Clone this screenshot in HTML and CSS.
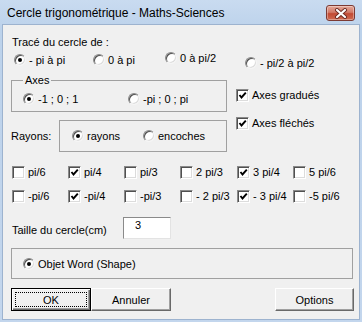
FILE: index.html
```html
<!DOCTYPE html>
<html lang="fr">
<head>
    <meta charset="UTF-8">
    <title>Cercle trigonométrique - Maths-Sciences</title>
    <link rel="stylesheet" href="styles.css">
</head>
<body>
    <div class="window">
        <div class="titlebar">
            <span class="title">Cercle trigonométrique - Maths-Sciences</span>
            <span class="close-button">
                <svg width="14" height="11" viewBox="0 0 14 11">
                    <path d="M3 2 L11 9 M11 2 L3 9" stroke="#6b2a22" stroke-width="4" stroke-linecap="round"/>
                    <path d="M3 2 L11 9 M11 2 L3 9" stroke="#ffffff" stroke-width="2.2" stroke-linecap="round"/>
                </svg>
            </span>
        </div>

        <div class="client">
            <div class="heading">Tracé du cercle de :</div>

            <!-- Range of the circle -->
            <div class="range-row">
                <label class="opt range-1"><span class="radio checked"></span>- pi à pi</label>
                <label class="opt range-2"><span class="radio"></span>0 à pi</label>
                <label class="opt range-3"><span class="radio"></span>0 à pi/2</label>
                <label class="opt range-4"><span class="radio"></span>- pi/2 à pi/2</label>
            </div>

            <div class="upper">
                <div class="left-col">
                    <fieldset class="axes">
                        <legend>Axes</legend>
                        <div class="axes-row">
                            <label class="opt axes-1"><span class="radio checked"></span>-1 ; 0 ; 1</label>
                            <label class="opt"><span class="radio"></span>-pi ; 0 ; pi</label>
                        </div>
                    </fieldset>

                    <div class="rays-row">
                        <span class="rays-label">Rayons:</span>
                        <div class="group rays-group">
                            <label class="opt rays-1"><span class="radio checked"></span>rayons</label>
                            <label class="opt"><span class="radio"></span>encoches</label>
                        </div>
                    </div>
                </div>

                <div class="right-col">
                    <label class="opt check-line"><span class="checkbox checked"></span>Axes gradués</label>
                    <label class="opt check-line"><span class="checkbox checked"></span>Axes fléchés</label>
                </div>
            </div>

            <!-- Angles to draw -->
            <div class="angles">
                <label class="opt"><span class="checkbox"></span>pi/6</label>
                <label class="opt"><span class="checkbox checked"></span>pi/4</label>
                <label class="opt"><span class="checkbox"></span>pi/3</label>
                <label class="opt"><span class="checkbox"></span>2 pi/3</label>
                <label class="opt"><span class="checkbox checked"></span>3 pi/4</label>
                <label class="opt"><span class="checkbox"></span>5 pi/6</label>
                <label class="opt"><span class="checkbox"></span>-pi/6</label>
                <label class="opt"><span class="checkbox checked"></span>-pi/4</label>
                <label class="opt"><span class="checkbox"></span>-pi/3</label>
                <label class="opt"><span class="checkbox"></span>- 2 pi/3</label>
                <label class="opt"><span class="checkbox checked"></span>- 3 pi/4</label>
                <label class="opt"><span class="checkbox"></span>-5 pi/6</label>
            </div>

            <div class="size-row">
                <span class="size-label">Taille du cercle(cm)</span>
                <div class="textbox">3</div>
            </div>

            <div class="group output-group">
                <label class="opt"><span class="radio checked"></span>Objet Word (Shape)</label>
            </div>

            <div class="buttons">
                <button class="btn default"><span class="focus">OK</span></button>
                <button class="btn"><span>Annuler</span></button>
                <button class="btn options"><span>Options</span></button>
            </div>
        </div>
    </div>
</body>
</html>
```

FILE: styles.css
```css
/* Dialog window */
* {
    box-sizing: border-box;
}
body {
    margin: 0;
    font-family: "Liberation Sans", Arial, sans-serif;
    font-size: 11px;
    color: #000;
}
.window {
    width: 362px;
    height: 322px;
    padding: 0 2px 2px;
    background: linear-gradient(#c9dbf0, #bcd2eb 30px, #c3d6ed);
    display: flex;
    flex-direction: column;
}
.titlebar {
    height: 24px;
    flex: none;
    display: flex;
    align-items: center;
    justify-content: space-between;
    padding: 2px 5px 0 5px;
    font-size: 12px;
}
.close-button {
    width: 29px;
    height: 16px;
    border: 1px solid #7c3a33;
    border-radius: 3px;
    background: linear-gradient(#e5a899, #d27a68 45%, #c24a33 55%, #cf6b52);
    box-shadow: inset 0 0 0 1px rgba(255, 255, 255, 0.35);
    display: flex;
    align-items: center;
    justify-content: center;
}
.client {
    flex: 1;
    background: #f0f0f0;
    border: 1px solid #9db3cf;
    padding: 10px 5px 0 8px;
}

/* Radio buttons and check boxes */
.opt {
    display: flex;
    align-items: center;
    gap: 3px;
    height: 14px;
    white-space: nowrap;
}
.radio {
    flex: none;
    width: 12px;
    height: 12px;
    border-radius: 50%;
    background: #fff;
    border: 1px solid;
    border-color: #8a8a8a #f4f4f4 #f4f4f4 #8a8a8a;
    box-shadow: inset 1px 1px 0 #505050, inset -1px -1px 0 #dcdcdc;
    display: flex;
    align-items: center;
    justify-content: center;
}
.radio.checked::after {
    content: "";
    width: 4px;
    height: 4px;
    border-radius: 50%;
    background: #000;
}
.checkbox {
    flex: none;
    width: 13px;
    height: 13px;
    background: #fff;
    border: 1px solid;
    border-color: #8a8a8a #fff #fff #8a8a8a;
    box-shadow: inset 1px 1px 0 #505050, inset -1px -1px 0 #dcdcdc;
}
.checkbox.checked {
    background: #fff url("data:image/svg+xml,%3Csvg xmlns='http://www.w3.org/2000/svg' width='11' height='11'%3E%3Cpath d='M2.5 5 L4.5 7.5 L8.8 2.6' fill='none' stroke='%23000' stroke-width='1.9'/%3E%3C/svg%3E") center / 11px 11px no-repeat;
}
.group, fieldset {
    border: 1px solid #a0a0a0;
}

.heading {
    height: 14px;
    line-height: 14px;
    margin-left: 1px;
}
.range-row {
    display: flex;
    align-items: flex-start;
    height: 14px;
    margin-top: 4px;
}
.range-1 {
    margin-left: 3px;
    width: 79px;
}
.range-2 {
    width: 72px;
}
.range-3 {
    width: 80px;
    margin-top: -2px;
}
.range-4 {
    margin-top: 3px;
}

.upper {
    display: flex;
    margin-top: 7px;
}
.left-col {
    width: 216px;
}
fieldset.axes {
    margin: 0;
    padding: 6px 0 5px 11px;
    min-width: 0;
}
fieldset.axes legend {
    padding: 0 2px;
    height: 12px;
    line-height: 12px;
}
.axes-row {
    display: flex;
}
.axes-1 {
    width: 105px;
}
.rays-row {
    display: flex;
    align-items: center;
    margin-top: 8px;
}
.rays-label {
    width: 48px;
}
.rays-group {
    width: 168px;
    height: 32px;
    display: flex;
    align-items: center;
    padding-left: 12px;
}
.rays-1 {
    width: 71px;
}
.right-col {
    margin-left: 9px;
}
.check-line {
    margin-top: 14px;
}

.angles {
    display: grid;
    grid-template-columns: 56px 56px 56px 57px 56px auto;
    grid-auto-rows: 14px;
    row-gap: 10px;
    margin: 13px 0 0 1px;
}

.size-row {
    display: flex;
    align-items: center;
    height: 22px;
    margin-top: 14px;
}
.size-label {
    width: 111px;
    margin-left: 1px;
    padding-top: 3px;
}
.textbox {
    width: 48px;
    height: 22px;
    background: #fff;
    border: 1px solid;
    border-color: #8a8a8a #e3e3e3 #e3e3e3 #8a8a8a;
    padding: 1px 0 0 11px;
    line-height: 13px;
}

.output-group {
    height: 31px;
    margin: 9px 1px 0 0;
    display: flex;
    align-items: center;
    padding-left: 11px;
}

/* Command buttons */
.buttons {
    display: flex;
    margin-top: 9px;
}
.btn {
    width: 80px;
    height: 23px;
    margin: 0;
    padding: 0;
    font: inherit;
    color: #000;
    background: #f0f0f0;
    border: 1px solid;
    border-color: #fff #696969 #696969 #fff;
    box-shadow: inset -1px -1px 0 #a0a0a0;
    display: flex;
    align-items: center;
    justify-content: center;
}
.btn.default {
    border-color: #000;
    box-shadow: inset 1px 1px 0 #fff, inset -1px -1px 0 #696969, inset -2px -2px 0 #a0a0a0;
    padding: 3px;
}
.btn .focus {
    flex: 1;
    align-self: stretch;
    border: 1px dotted #000;
    display: flex;
    align-items: center;
    justify-content: center;
}
.btn.options {
    width: 79px;
    margin-left: auto;
}
```
